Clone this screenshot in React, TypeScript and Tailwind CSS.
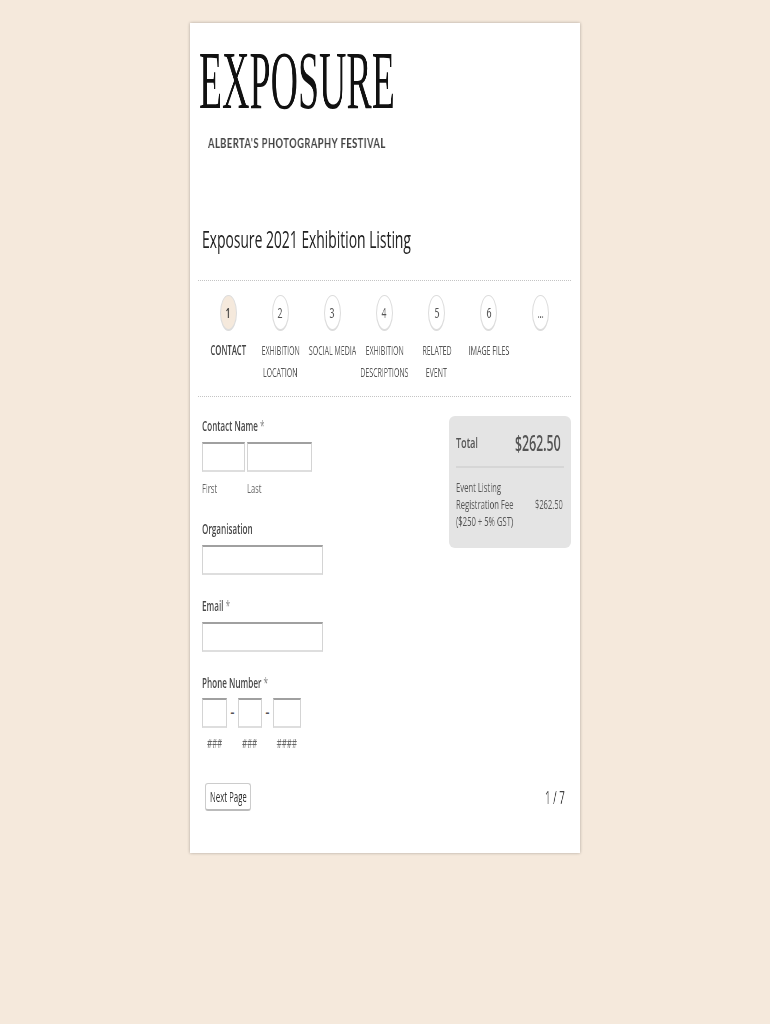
import type { ReactNode } from "react";

const steps = [
  { n: "1", label: ["CONTACT"], active: true },
  { n: "2", label: ["EXHIBITION", "LOCATION"] },
  { n: "3", label: ["SOCIAL MEDIA"] },
  { n: "4", label: ["EXHIBITION", "DESCRIPTIONS"] },
  { n: "5", label: ["RELATED", "EVENT"] },
  { n: "6", label: ["IMAGE FILES"] },
  { n: "...", label: [] },
];

// the page in the picture is squeezed horizontally, so text is narrowed with scale-x
const Narrow = ({ children, className = "scale-x-[0.6]" }: { children: ReactNode; className?: string }) => (
  <span className={`block whitespace-nowrap origin-left will-change-transform ${className}`}>{children}</span>
);

const Centered = ({ children, className = "" }: { children: ReactNode; className?: string }) => (
  <div className="flex justify-center">
    <span className={`block whitespace-nowrap will-change-transform ${className}`}>{children}</span>
  </div>
);

const Field = ({ className = "" }: { className?: string }) => (
  <input className={`block h-[30px] bg-white border border-[#d4d4d4] border-t-2 border-t-[#a0a0a0] border-b-2 border-b-[#dedede] ${className}`} />
);

const Label = ({ text, required }: { text: string; required?: boolean }) => (
  <Narrow className="scale-x-[0.54] text-[15px] leading-[20px] font-semibold text-[#4a4a4a]">
    {text}
    {required && <span className="font-normal text-[#888]"> *</span>}
  </Narrow>
);

export default function App() {
  return (
    <div className="min-h-screen h-[1024px] bg-[#f5e9dc] pt-[23px] font-['Open_Sans',sans-serif]">
      <div className="mx-auto w-[390px] h-[830px] bg-white shadow-[0_0_3px_rgba(0,0,0,0.3)] pl-[8px] pr-[9px]">
        {/* logo */}
        <div className="h-[130px] pt-[29px] pl-[1px]">
          <span className="block font-['Liberation_Serif',serif] text-[#111] text-[82px] leading-[58px] whitespace-nowrap origin-left will-change-transform scale-x-[0.462]">
            EXPOSURE
          </span>
          <span className="block mt-[27px] ml-[9px] font-['Lato',sans-serif] font-bold text-[#444] text-[12.5px] leading-[14px] tracking-[0.7px] whitespace-nowrap origin-left will-change-transform scale-x-[0.74]">
            ALBERTA'S PHOTOGRAPHY FESTIVAL
          </span>
        </div>

        <div className="pl-[4px] mt-[70px]">
          <Narrow className="scale-x-[0.566] text-[24.5px] leading-[32px] text-[#222]">Exposure 2021 Exhibition Listing</Narrow>
        </div>

        <div className="mt-[25px] border-t border-dotted border-[#c4c4c4]" />

        {/* steps */}
        <div className="h-[116px] px-[4px] pt-[14px] grid grid-cols-7 border-b border-dotted border-[#c4c4c4]">
          {steps.map((s) => (
            <div key={s.n}>
              <div className="flex justify-center">
                <div
                  className={`w-[17px] h-[36px] rounded-[50%] flex items-center justify-center border border-[#ddd] border-b-2 ${s.active ? "bg-[#f5e9dc]" : "bg-white"}`}
                >
                  <Centered className={`scale-x-[0.6] text-[14px] ${s.active ? "text-[#333] font-semibold" : "text-[#555]"}`}>{s.n}</Centered>
                </div>
              </div>
              <div className="mt-[8px]">
                {s.label.map((l) => (
                  <Centered
                    key={l}
                    className={`text-[13.5px] leading-[22px] ${s.active ? "scale-x-[0.57] font-semibold text-[#444]" : "scale-x-[0.52] text-[#555]"}`}
                  >
                    {l}
                  </Centered>
                ))}
              </div>
            </div>
          ))}
        </div>

        {/* form + total */}
        <div className="flex justify-between pt-[18px]">
          <div className="pl-[4px] w-[200px]">
            <Label text="Contact Name" required />
            <div className="flex gap-[2px] mt-[7px]">
              <Field className="w-[43px]" />
              <Field className="w-[65px]" />
            </div>
            <div className="flex gap-[2px] mt-[7px]">
              <div className="w-[43px]"><Narrow className="scale-x-[0.58] text-[13px] leading-[18px] text-[#666]">First</Narrow></div>
              <div className="w-[65px]"><Narrow className="scale-x-[0.58] text-[13px] leading-[18px] text-[#666]">Last</Narrow></div>
            </div>

            <div className="mt-[21px]"><Label text="Organisation" /></div>
            <Field className="w-[121px] mt-[7px]" />

            <div className="mt-[20px]"><Label text="Email" required /></div>
            <Field className="w-[121px] mt-[7px]" />

            <div className="mt-[20px]"><Label text="Phone Number" required /></div>
            <div className="flex items-center mt-[6px]">
              <Field className="w-[25px]" />
              <span className="w-[11px] text-center text-[12px] font-bold text-[#555]">-</span>
              <Field className="w-[24px]" />
              <span className="w-[11px] text-center text-[12px] font-bold text-[#555]">-</span>
              <Field className="w-[28px]" />
            </div>
            <div className="flex mt-[6px]">
              <div className="w-[25px]"><Centered className="scale-x-[0.6] text-[13px] leading-[18px] text-[#666]">###</Centered></div>
              <div className="w-[11px]" />
              <div className="w-[24px]"><Centered className="scale-x-[0.6] text-[13px] leading-[18px] text-[#666]">###</Centered></div>
              <div className="w-[11px]" />
              <div className="w-[28px]"><Centered className="scale-x-[0.6] text-[13px] leading-[18px] text-[#666]">####</Centered></div>
            </div>
          </div>

          <div className="mt-[1px] w-[122px] h-[132px] bg-[#e4e4e4] rounded-[6px] pl-[7px] pr-[7px] pt-[14px]">
            <div className="h-[38px] flex justify-between border-b-2 border-[#d6d6d6]">
              <div className="w-[30px]"><Narrow className="scale-x-[0.6] text-[15px] leading-[25px] font-semibold text-[#555]">Total</Narrow></div>
              <div className="w-[46px] mr-[3px]"><Narrow className="scale-x-[0.56] text-[22px] leading-[24px] font-semibold text-[#555]">$262.50</Narrow></div>
            </div>
            <div className="flex justify-between mt-[11px]">
              <div className="w-[70px] text-[13px] leading-[17px] text-[#555]">
                <Narrow className="scale-x-[0.59]">Event Listing</Narrow>
                <Narrow className="scale-x-[0.59]">Registration Fee</Narrow>
                <Narrow className="scale-x-[0.59]">($250 + 5% GST)</Narrow>
              </div>
              <div className="w-[29px] pt-[17px]"><Narrow className="scale-x-[0.58] text-[13px] leading-[17px] text-[#555]">$262.50</Narrow></div>
            </div>
          </div>
        </div>

        {/* footer */}
        <div className="flex justify-between items-center pl-[7px] pr-[6px] mt-[31px]">
          <button className="w-[46px] h-[28px] flex items-center justify-center bg-white rounded-[3px] border border-[#ccc] border-b-2 border-b-[#bbb]">
            <Centered className="scale-x-[0.52] text-[15px] text-[#333]">Next Page</Centered>
          </button>
          <div className="w-[20px]"><Narrow className="scale-x-[0.54] text-[18px] text-[#444]">1 / 7</Narrow></div>
        </div>
      </div>
    </div>
  );
}
